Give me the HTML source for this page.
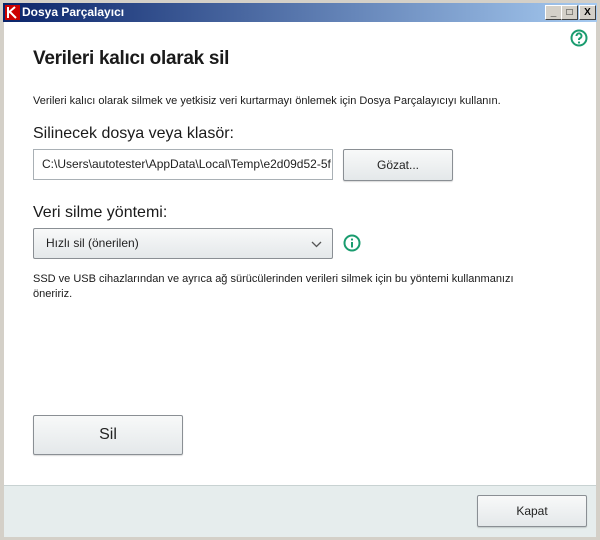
<html><head><style>
body{margin:0;width:600px;height:540px;overflow:hidden;background:#d4d0c8;font-family:"Liberation Sans",sans-serif;position:relative}
.a{position:absolute}
.tb{left:3px;top:3px;width:594px;height:19px;background:linear-gradient(90deg,#0a246a,#a6caf0)}
.tt{left:22px;top:5px;color:#fff;font-weight:bold;font-size:12px}
.wb{top:2px;width:15px;height:13px;background:#d4d0c8;border:1px solid;border-color:#fff #404040 #404040 #fff;font-size:10px;text-align:center;line-height:13px;font-weight:bold}
.c{left:4px;top:22px;width:592px;height:463px;background:#fff}
.f{left:4px;top:485px;width:592px;height:51px;background:#e6eded;border-top:1px solid #c8d2d2}
.btn{border:1px solid #8a8f94;border-radius:2px;background:linear-gradient(#f8f9f9,#e4e8ea);box-shadow:0 1px 1px rgba(0,0,0,.15);text-align:center;color:#222;box-sizing:border-box}
.txt{color:#1a1a1a}
</style></head><body>
<div class="a tb"></div>
<svg class="a" style="left:5px;top:5px" width="15" height="15"><rect width="15" height="15" fill="#c00"/><path d="M3 2v11M3 8l7-6M5 7l6 6" stroke="#fff" stroke-width="2"/></svg>
<div class="a tt">Dosya Parçalayıcı</div>
<div class="a wb" style="left:545px;top:5px">_</div>
<div class="a wb" style="left:561px;top:5px">□</div>
<div class="a wb" style="left:579px;top:5px">X</div>
<div class="a c"></div>
<svg class="a" style="left:570px;top:29px" width="18" height="18"><circle cx="9" cy="9" r="7.5" fill="none" stroke="#1a9c6f" stroke-width="2"/><path d="M6.5 7a2.5 2.5 0 1 1 3.5 2.2c-.8.4-1 .9-1 1.8" fill="none" stroke="#1a9c6f" stroke-width="2"/><circle cx="9" cy="13.5" r="1.1" fill="#1a9c6f"/></svg>
<div class="a txt" style="left:33px;top:48px;font-size:19px;font-weight:bold;letter-spacing:-0.3px">Verileri kalıcı olarak sil</div>
<div class="a txt" style="left:33px;top:95px;font-size:11px">Verileri kalıcı olarak silmek ve yetkisiz veri kurtarmayı önlemek için Dosya Parçalayıcıyı kullanın.</div>
<div class="a txt" style="left:33px;top:125px;font-size:16px">Silinecek dosya veya klasör:</div>
<div class="a" style="left:33px;top:149px;width:300px;height:31px;border:1px solid #a9b0b5;box-sizing:border-box;font-size:12px;line-height:29px;padding-left:8px;overflow:hidden;white-space:nowrap;color:#222">C:\Users\autotester\AppData\Local\Temp\e2d09d52-5f</div>
<div class="a btn" style="left:343px;top:149px;width:110px;height:32px;font-size:12px;line-height:30px">Gözat...</div>
<div class="a txt" style="left:33px;top:204px;font-size:16px">Veri silme yöntemi:</div>
<div class="a btn" style="left:33px;top:228px;width:300px;height:31px;font-size:12px;line-height:29px;text-align:left;padding-left:12px;box-shadow:none">Hızlı sil (önerilen)<svg class="a" style="left:277px;top:12px" width="11" height="7"><path d="M1 1l4.5 4.5L10 1" fill="none" stroke="#555" stroke-width="1.3"/></svg></div>
<svg class="a" style="left:343px;top:234px" width="18" height="18"><circle cx="9" cy="9" r="7.5" fill="none" stroke="#1a9c6f" stroke-width="2"/><circle cx="9" cy="5.5" r="1.1" fill="#1a9c6f"/><path d="M9 8v5.5" stroke="#1a9c6f" stroke-width="2"/></svg>
<div class="a txt" style="left:33px;top:272px;font-size:11px;line-height:15px;width:520px">SSD ve USB cihazlarından ve ayrıca ağ sürücülerinden verileri silmek için bu yöntemi kullanmanızı öneririz.</div>
<div class="a btn" style="left:33px;top:415px;width:150px;height:40px;font-size:16px;line-height:38px">Sil</div>
<div class="a f"></div>
<div class="a btn" style="left:477px;top:495px;width:110px;height:32px;font-size:12px;line-height:30px">Kapat</div>
</body></html>
